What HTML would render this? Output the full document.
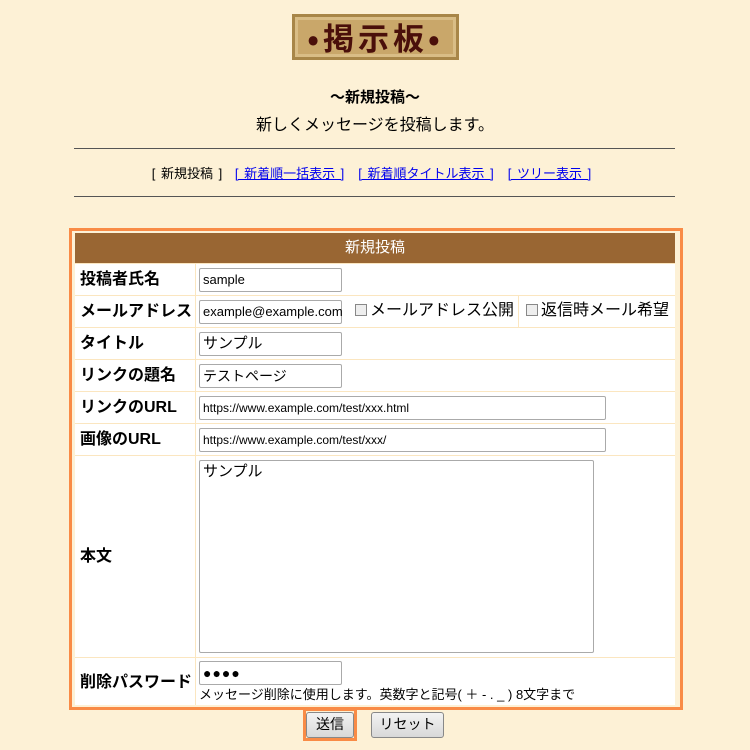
<!DOCTYPE html>
<html><head><meta charset="utf-8"><style>
body{margin:0;width:750px;height:750px;background:#fdf1d6;font-family:"Liberation Sans","Noto Sans CJK JP",sans-serif;position:relative;overflow:hidden;color:#000}
.a{position:absolute}
.logo{left:292px;top:14px;width:167px;height:46px;background:#c9a76a;border:3px solid #a88648;box-sizing:border-box;box-shadow:inset 0 0 0 3px #d9bd86;text-align:center;font-size:31px;line-height:40px;color:#4a0f0a;font-weight:bold;letter-spacing:4px;font-family:"Noto Sans CJK JP",sans-serif}
.hr{left:74px;width:601px;height:1px;background:#555}
.nav{top:163px;left:0;width:750px;text-align:center;font-size:13px;word-spacing:2px}
.nav a{color:#00e;text-decoration:underline;margin:0 7px}
.frame{left:69px;top:228px;width:614px;height:482px;border:3px solid #f98b46;box-sizing:border-box}
.hd{left:75px;top:233px;width:600px;height:30px;background:#996633;color:#fff;text-align:center;font-size:15px;line-height:30px}
.row{left:75px;width:600px;background:#fff;border-top:1px solid #fbe6c0;box-sizing:border-box}
.lab{left:80px;font-weight:bold;font-size:16px;line-height:20px}
.vl{left:195px;width:1px;background:#fbe6c0;top:263px;height:442px}
.in{background:#fff;border:1px solid #aaa;border-radius:2px;box-sizing:border-box;font-size:13px;padding-left:3px;line-height:22px;height:24px}
.cb{width:12px;height:12px;border:1px solid #888;background:#eee;box-sizing:border-box;display:inline-block;vertical-align:-1px;margin-right:3px}
.btn{border:1px solid #888;border-radius:3px;background:linear-gradient(#f3f3f3,#d8d8d8);font-size:14px;text-align:center;line-height:22px;box-sizing:border-box}
</style></head><body>
<div class="a logo">•掲示板•</div>
<div class="a" style="top:86px;left:0;width:750px;text-align:center;font-weight:bold;font-size:15px">〜新規投稿〜</div>
<div class="a" style="top:111px;left:0;width:750px;text-align:center;font-size:16px">新しくメッセージを投稿します。</div>
<div class="a hr" style="top:148px"></div>
<div class="a nav">[ 新規投稿 ] <a>[ 新着順一括表示 ]</a><a>[ 新着順タイトル表示 ]</a><a>[ ツリー表示 ]</a></div>
<div class="a hr" style="top:196px"></div>
<div class="a frame"></div>
<div class="a hd">新規投稿</div>
<div class="a row" style="top:263px;height:32px"></div>
<div class="a row" style="top:295px;height:32px"></div>
<div class="a row" style="top:327px;height:32px"></div>
<div class="a row" style="top:359px;height:32px"></div>
<div class="a row" style="top:391px;height:32px"></div>
<div class="a row" style="top:423px;height:32px"></div>
<div class="a row" style="top:455px;height:202px"></div>
<div class="a row" style="top:657px;height:48px"></div>
<div class="a vl"></div>
<div class="a" style="left:518px;top:295px;width:1px;height:32px;background:#fbe6c0"></div>
<div class="a lab" style="top:270px">投稿者氏名</div>
<div class="a lab" style="top:302px">メールアドレス</div>
<div class="a lab" style="top:334px">タイトル</div>
<div class="a lab" style="top:366px">リンクの題名</div>
<div class="a lab" style="top:398px">リンクのURL</div>
<div class="a lab" style="top:430px">画像のURL</div>
<div class="a lab" style="top:547px">本文</div>
<div class="a lab" style="top:673px">削除パスワード</div>
<div class="a in" style="left:199px;top:268px;width:143px">sample</div>
<div class="a in" style="left:199px;top:300px;width:143px">example@example.com</div>
<div class="a" style="left:355px;top:300px;font-size:16px;line-height:22px"><span class="cb"></span>メールアドレス公開</div>
<div class="a" style="left:526px;top:300px;font-size:16px;line-height:22px"><span class="cb"></span>返信時メール希望</div>
<div class="a in" style="left:199px;top:332px;width:143px;font-size:15px">サンプル</div>
<div class="a in" style="left:199px;top:364px;width:143px;font-size:14px">テストページ</div>
<div class="a in" style="left:199px;top:396px;width:407px;font-size:12px">https://www.example.com/test/xxx.html</div>
<div class="a in" style="left:199px;top:428px;width:407px;font-size:12px">https://www.example.com/test/xxx/</div>
<div class="a in" style="left:199px;top:460px;width:395px;height:193px;font-size:15px;line-height:22px">サンプル</div>
<div class="a in" style="left:199px;top:661px;width:143px;font-size:14px;letter-spacing:1px">●●●●</div>
<div class="a" style="left:199px;top:684px;font-size:13px">メッセージ削除に使用します。英数字と記号( ＋ - . _ ) 8文字まで</div>
<div class="a" style="left:303px;top:708px;width:54px;height:33px;border:3px solid #f98b46;box-sizing:border-box"></div>
<div class="a btn" style="left:306px;top:712px;width:48px;height:26px">送信</div>
<div class="a btn" style="left:371px;top:712px;width:73px;height:26px">リセット</div>
</body></html>
